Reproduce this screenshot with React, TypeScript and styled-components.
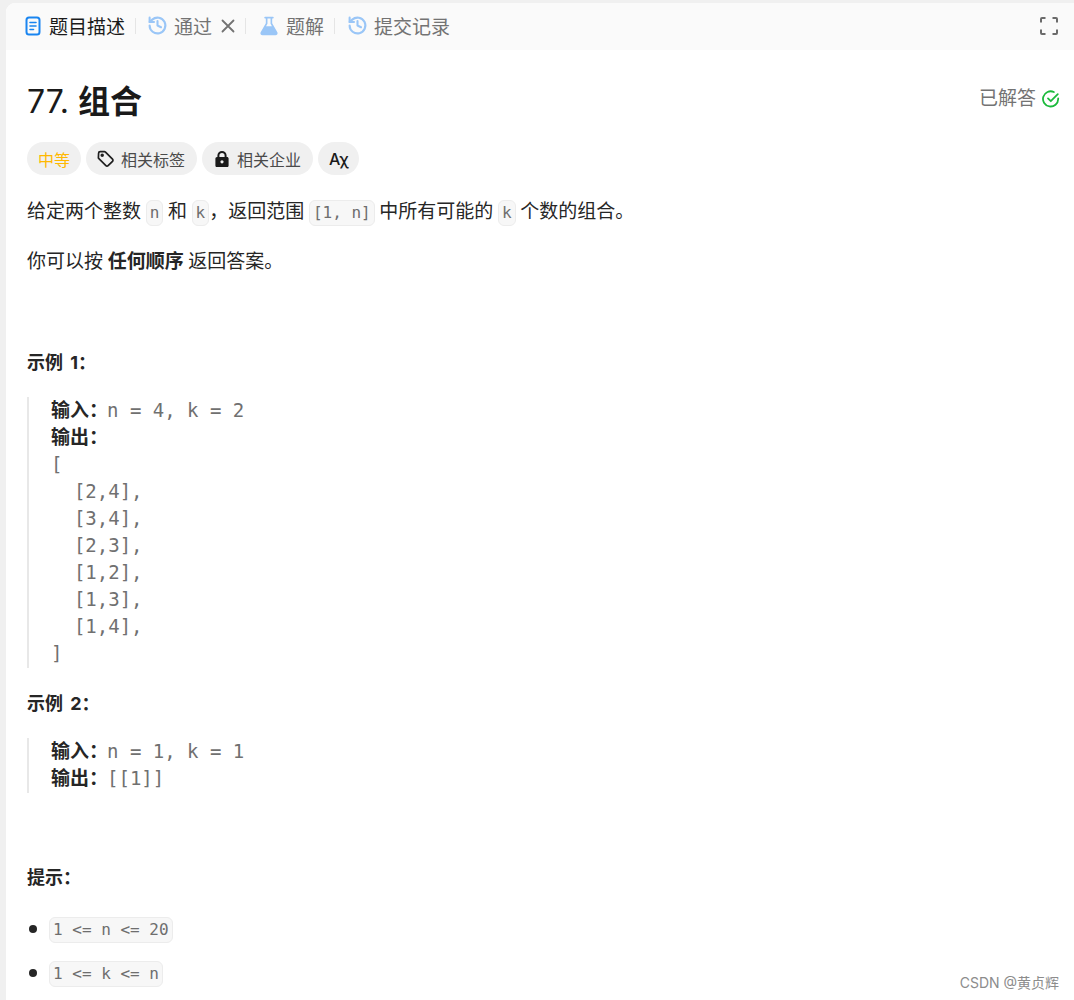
import { FC, ReactNode } from 'react'
import styled, { createGlobalStyle } from 'styled-components'

const SANS = `Inter, 'Noto Sans CJK SC', sans-serif`
const MONO = `'DejaVu Sans Mono', 'Noto Sans CJK SC', monospace`

const GlobalStyles = createGlobalStyle`
  html, body {
    margin: 0;
    padding: 0;
    height: 1000px;
    overflow: hidden;
    background: #f0f0f0;
    font-family: ${SANS};
  }
  body * {
    box-sizing: border-box;
  }
`

const Wrapper = styled.div`
  position: relative;
  height: 1000px;
  padding: 3px 0 0 6px;
  overflow: hidden;
`

const Panel = styled.div`
  background: #fff;
  border-radius: 9px 0 0 0;
  height: 997px;
  overflow: hidden;
`

const TabBar = styled.div`
  display: flex;
  align-items: center;
  height: 47px;
  padding: 0 16px 2px 17px;
  background: #fafafa;
`

const Tab = styled.div<{ $active?: boolean }>`
  display: flex;
  align-items: center;
  gap: 6px;
  font-size: 19px;
  color: ${(props) => (props.$active ? '#1a1a1a' : '#737373')};
`

const TabDivider = styled.div<{ $right?: number }>`
  width: 1px;
  height: 16px;
  margin: 0 ${(props) => props.$right ?? 12}px 0 10px;
  background: #e5e5e5;
`

const CloseButton = styled.div`
  display: flex;
  margin-left: 3px;
`

const Expand = styled.div`
  display: flex;
  margin-left: auto;
`

const Content = styled.div`
  padding: 0 14px 0 21px;
`

const TitleRow = styled.div`
  display: flex;
  align-items: flex-start;
  justify-content: space-between;
  height: 92px;
  padding-top: 30px;
`

const Title = styled.h1`
  margin: 0;
  font-size: 32px;
  line-height: 44px;
  font-weight: 400;
  color: #1a1a1a;

  b {
    font-weight: 700;
  }
`

const Solved = styled.div`
  display: flex;
  align-items: center;
  gap: 6px;
  margin-top: -3px;
  font-size: 19px;
  line-height: 44px;
  color: #737373;
`

const Chips = styled.div`
  display: flex;
  gap: 5px;
  height: 33px;
`

const Chip = styled.div<{ $accent?: boolean; $icon?: boolean }>`
  display: flex;
  align-items: center;
  gap: 6px;
  height: 33px;
  padding: 0 ${(props) => (props.$icon ? 12 : 11)}px 0 11px;
  border-radius: 17px;
  background: #f0f0f0;
  font-size: 16px;
  color: ${(props) => (props.$accent ? '#ffb800' : '#4a4a4a')};
`

const LangMark = styled.span`
  font-size: 16px;
  font-weight: 500;
  letter-spacing: -1px;
  color: #1a1a1a;
`

const Paragraph = styled.p`
  margin: 0;
  font-size: 19px;
  line-height: 27px;
  word-spacing: -0.7px;
  color: #262626;

  b {
    font-weight: 700;
  }
`

const Description = styled(Paragraph)`
  margin-top: 23px;
  white-space: pre;
`

const SecondParagraph = styled(Paragraph)`
  margin-top: 22px;
`

const Code = styled.code`
  display: inline-block;
  padding: 0 3px;
  border: 1px solid #ececec;
  border-radius: 6px;
  background: #f7f7f7;
  font-family: ${MONO};
  font-size: 16px;
  line-height: 24px;
  word-spacing: 0;
  color: #6e6e6e;
  vertical-align: 0;
`

const SectionTitle = styled.div<{ $top: number }>`
  margin-top: ${(props) => props.$top}px;
  font-size: 18px;
  line-height: 27px;
  font-weight: 700;
  word-spacing: 3px;
  color: #262626;
`

const Example = styled.div`
  margin-top: 21px;
  padding-bottom: 1px;
  padding-left: 22px;
  border-left: 2px solid #e8e8e8;
  font-family: ${MONO};
  font-size: 19px;
  line-height: 27px;
  color: #707070;
  white-space: pre;

  b {
    margin-right: -1px;
    font-family: ${SANS};
    font-size: 19px;
    font-weight: 700;
    color: #262626;
  }
`

const List = styled.ul`
  margin: 25px 0 0;
  padding: 0;
  list-style: none;
`

const Item = styled.li`
  display: flex;
  align-items: center;
  gap: 12px;
  height: 27px;
  margin-bottom: 17px;
  font-size: 19px;

  &::before {
    content: '';
    width: 8px;
    height: 8px;
    margin: -2px 0 0 2px;
    border-radius: 50%;
    background: #262626;
  }
`

const Watermark = styled.div`
  position: absolute;
  right: 15px;
  bottom: 8px;
  font-size: 14px;
  line-height: 18px;
  color: #8c8c8c;
`

const HistoryIcon: FC = () => (
  <svg width="21" height="21" viewBox="0 0 24 24" fill="none" stroke="#9ac6f7" strokeWidth="2.4" strokeLinecap="round" strokeLinejoin="round">
    <path d="M3 12a9 9 0 1 0 3-6.7L3 8" />
    <path d="M3 3v5h5" />
    <path d="M12 7v5l4 2" />
  </svg>
)

const Icons: Record<string, ReactNode> = {
  description: (
    <svg width="20" height="20" viewBox="0 0 20 20" fill="none">
      <rect x="3.5" y="1.5" width="13" height="17" rx="2.5" stroke="#1a85f0" strokeWidth="2" />
      <path d="M7 6.5h6M7 10h6M7 13.5h3.5" stroke="#1a85f0" strokeWidth="1.6" strokeLinecap="round" />
    </svg>
  ),
  close: (
    <svg width="14" height="14" viewBox="0 0 14 14" stroke="#737373" strokeWidth="1.8" strokeLinecap="round">
      <path d="M1.5 1.5l11 11M12.5 1.5l-11 11" />
    </svg>
  ),
  flask: (
    <svg width="22" height="22" viewBox="0 0 20 20">
      <path d="M6.5 1.5h7a.8.8 0 0 1 0 1.6h-.6v4.4l4.7 8.2c.7 1.3-.2 2.8-1.7 2.8H4.1c-1.500 0-2.400-1.500-1.700-2.800l4.700-8.200V3.100h-.6a.8.8 0 0 1 0-1.600z" fill="#9ac6f7" />
      <path d="M8.600 3.100h2.800v4.800l1.300 2.300H7.300l1.300-2.300z" fill="#fafafa" />
    </svg>
  ),
  expand: (
    <svg width="18" height="18" viewBox="0 0 18 18" fill="none" stroke="#6b6b6b" strokeWidth="2">
      <path d="M1 5.500V2a1 1 0 0 1 1-1h3.500M12.500 1H16a1 1 0 0 1 1 1v3.500M17 12.500V16a1 1 0 0 1-1 1h-3.500M5.500 17H2a1 1 0 0 1-1-1v-3.500" />
    </svg>
  ),
  check: (
    <svg width="18" height="18" viewBox="0 0 18 18" fill="none" stroke="#1cba3c" strokeWidth="1.8" strokeLinecap="round" strokeLinejoin="round">
      <path d="M16.200 8.300V9A7.600 7.600 0 1 1 11.800 2" />
      <path d="M6 8.400l2.800 2.800 7-7" />
    </svg>
  ),
  tag: (
    <svg width="18" height="18" viewBox="0 0 18 18" fill="none" stroke="#1f1f1f" strokeWidth="1.700" strokeLinejoin="round">
      <path d="M1.600 3.200c0-.9.7-1.600 1.600-1.600h4.200c.4 0 .8.2 1.100.5l7 7c.6.600.6 1.600 0 2.200l-4.400 4.400c-.6.600-1.600.6-2.200 0l-7-7a1.600 1.600 0 0 1-.5-1.100z" />
      <circle cx="5.200" cy="5.200" r=".9" fill="#1f1f1f" />
    </svg>
  ),
  lock: (
    <svg width="18" height="18" viewBox="0 0 18 18">
      <path d="M9 1a4.600 4.600 0 0 0-4.600 4.600V7H4a1.600 1.600 0 0 0-1.600 1.600v6.800C2.400 16.300 3.100 17 4 17h10c.9 0 1.600-.7 1.600-1.600V8.600c0-.9-.7-1.600-1.600-1.600h-.4V5.600A4.600 4.600 0 0 0 9 1zm2.600 6H6.400V5.600a2.600 2.600 0 0 1 5.200 0z" fill="#1a1a1a" />
      <circle cx="9" cy="11.800" r="1.600" fill="#f0f0f0" />
    </svg>
  ),
}

const App: FC = () => (
  <Wrapper>
    <GlobalStyles />

    <Panel>
      <TabBar>
        <Tab $active>
          {Icons.description}
          题目描述
        </Tab>
        <TabDivider $right={11} />
        <Tab>
          <HistoryIcon />
          通过
          <CloseButton>{Icons.close}</CloseButton>
        </Tab>
        <TabDivider />
        <Tab>
          {Icons.flask}
          题解
        </Tab>
        <TabDivider />
        <Tab>
          <HistoryIcon />
          提交记录
        </Tab>
        <Expand>{Icons.expand}</Expand>
      </TabBar>

      <Content>
        <TitleRow>
          <Title>
            77. <b>组合</b>
          </Title>
          <Solved>
            已解答
            {Icons.check}
          </Solved>
        </TitleRow>

        <Chips>
          <Chip $accent>中等</Chip>
          <Chip $icon>
            {Icons.tag}
            相关标签
          </Chip>
          <Chip $icon>
            {Icons.lock}
            相关企业
          </Chip>
          <Chip>
            <LangMark>Aχ</LangMark>
          </Chip>
        </Chips>

        <Description>
          给定两个整数 <Code>n</Code> 和 <Code>k</Code>，返回范围 <Code>[1, n]</Code> 中所有可能的 <Code>k</Code> 个数的组合。
        </Description>
        <SecondParagraph>
          你可以按 <b>任何顺序</b> 返回答案。
        </SecondParagraph>

        <SectionTitle $top={74}>示例 1：</SectionTitle>
        <Example>
          <div>
            <b>输入：</b>n = 4, k = 2
          </div>
          <div>
            <b>输出：</b>
          </div>
          {`[
  [2,4],
  [3,4],
  [2,3],
  [1,2],
  [1,3],
  [1,4],
]`}
        </Example>

        <SectionTitle $top={22}>示例 2：</SectionTitle>
        <Example>
          <div>
            <b>输入：</b>n = 1, k = 1
          </div>
          <div>
            <b>输出：</b>[[1]]
          </div>
        </Example>

        <SectionTitle $top={71}>提示：</SectionTitle>
        <List>
          <Item>
            <Code>1 &lt;= n &lt;= 20</Code>
          </Item>
          <Item>
            <Code>1 &lt;= k &lt;= n</Code>
          </Item>
        </List>
      </Content>
    </Panel>

    <Watermark>CSDN @黄贞辉</Watermark>
  </Wrapper>
)

export default App
